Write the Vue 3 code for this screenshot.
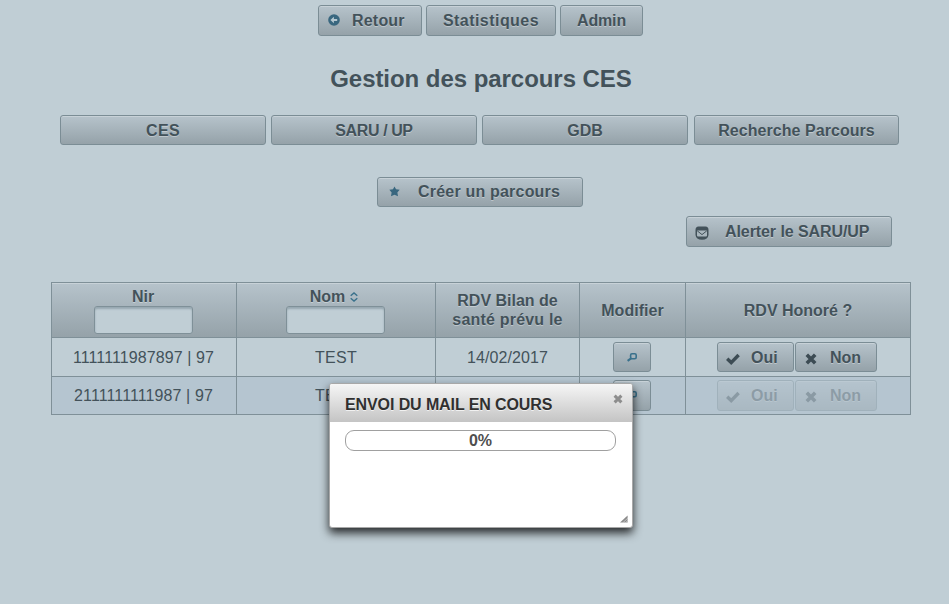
<script setup>
const tabs = [
  { label: 'CES', cls: 'ls-3' },
  { label: 'SARU / UP', cls: 'ls-n4' },
  { label: 'GDB', cls: '' },
  { label: 'Recherche Parcours', cls: 'ls-05' },
]
const rows = [
  { nir: '1111111987897 | 97', nom: 'TEST', date: '14/02/2017', disabled: false },
  { nir: '2111111111987 | 97', nom: 'TEST', date: '14/02/2017', disabled: true },
]
</script>

<template>
  <main class="page">
    <nav class="top-nav">
      <button class="btn back">
        <svg class="ico back-ico" viewBox="0 0 12 12" width="12" height="12">
          <circle cx="6" cy="6" r="5.8" fill="#39677f" />
          <path d="M2.4 6 L5.9 2.8 V5 H9.2 V7 H5.9 V9.2 Z" fill="#b6c8d1" />
        </svg>
        <span class="ls-2">Retour</span>
      </button>
      <button class="btn stats"><span class="ls-4">Statistiques</span></button>
      <button class="btn admin"><span class="ls-n1">Admin</span></button>
    </nav>

    <h1>Gestion des parcours CES</h1>

    <nav class="tabs">
      <button v-for="t in tabs" :key="t.label" class="btn short"><span :class="t.cls">{{ t.label }}</span></button>
    </nav>

    <div class="create-row">
      <button class="btn short create">
        <svg class="ico" viewBox="0 0 10 10" width="11" height="11">
          <path d="M5 .4 L6.4 3 L9.7 3.5 L7.6 5.9 L8.2 9.4 L5 8 L1.8 9.4 L2.4 5.9 L.3 3.5 L3.6 3 Z" fill="#39677f" />
        </svg>
        <span class="ls-2">Créer un parcours</span>
      </button>
    </div>

    <div class="alert-row">
      <button class="btn alert">
        <svg class="ico mail-ico" viewBox="0 0 14 14" width="14" height="14">
          <path d="M3.5 .5 H10.5 Q13.5 .8 13.5 4 V9 Q13 13.8 7 13.8 Q1 13.8 .5 9 V4 Q.5 .8 3.5 .5 Z" fill="#43525a" />
          <path d="M2 4.6 H12 V9.4 Q12 10.4 11 10.4 H3 Q2 10.4 2 9.4 Z" fill="#a9b6bd" />
          <path d="M2.2 4.8 L7 8.6 L11.8 4.8" fill="none" stroke="#43525a" stroke-width="1" />
        </svg>
        <span class="ls-n05">Alerter le SARU/UP</span>
      </button>
    </div>

    <table>
      <colgroup>
        <col class="c1" /><col class="c2" /><col class="c3" /><col class="c4" /><col class="c5" />
      </colgroup>
      <thead>
        <tr>
          <th class="filter">
            <div class="head"><span>Nir</span></div>
            <input type="text" aria-label="Nir" />
          </th>
          <th class="filter">
            <div class="head sort">
              <span>Nom</span>
              <svg viewBox="0 0 8 10" width="8" height="10">
                <path d="M.7 3.8 L4 1 L7.3 3.8 M.7 6.2 L4 9 L7.3 6.2" fill="none" stroke="#39718c" stroke-width="1.4" />
              </svg>
            </div>
            <input type="text" aria-label="Nom" />
          </th>
          <th><span>RDV Bilan de</span><br /><span class="ls-2">santé prévu le</span></th>
          <th><span class="ls-05">Modifier</span></th>
          <th><span>RDV Honoré ?</span></th>
        </tr>
      </thead>
      <tbody>
        <tr v-for="r in rows" :key="r.nir" :class="{ odd: r.disabled }">
          <td class="nir"><span class="ls-1">{{ r.nir }}</span></td>
          <td><span class="ls-3">{{ r.nom }}</span></td>
          <td><span class="ls-1">{{ r.date }}</span></td>
          <td>
            <div class="cell">
              <button class="btn edit">
                <svg viewBox="0 0 10 9" width="10" height="9">
                  <rect x="3.6" y=".8" width="5.6" height="4.9" rx="1.4" fill="none" stroke="#39718c" stroke-width="1.6" />
                  <path d="M4.4 5.2 L.6 7.9" fill="none" stroke="#39718c" stroke-width="2.2" />
                </svg>
              </button>
            </div>
          </td>
          <td>
            <div class="cell">
              <button class="btn yes" :class="{ off: r.disabled }">
                <svg class="ico low" viewBox="0 0 14 12" width="14" height="12">
                  <path d="M1.2 5.8 L5.2 9.6 L12.6 2" fill="none" stroke="#3d4c54" stroke-width="3.4" />
                </svg>
                <span>Oui</span>
              </button>
              <button class="btn no" :class="{ off: r.disabled }">
                <svg class="ico low" viewBox="0 0 12 12" width="12" height="12">
                  <path d="M1.8 1.8 L10.2 10.2 M10.2 1.8 L1.8 10.2" fill="none" stroke="#3d4c54" stroke-width="3.6" />
                </svg>
                <span>Non</span>
              </button>
            </div>
          </td>
        </tr>
      </tbody>
    </table>

    <section class="dialog" role="dialog">
      <header>
        <h2>ENVOI DU MAIL EN COURS</h2>
        <svg class="close" viewBox="0 0 10 10" width="10" height="10">
          <path d="M1.6 1.6 L8.4 8.4 M8.4 1.6 L1.6 8.4" fill="none" stroke="#8d8d8d" stroke-width="3" />
        </svg>
      </header>
      <div class="content"><div class="progress">0%</div></div>
      <svg class="grip" viewBox="0 0 8 8" width="8" height="8">
        <path d="M0 7.6 L7.6 .4 V7.6 Z" fill="#8a8a8a" />
        <path d="M2.6 8 L8 2.9 M5.2 8 L8 5.4" stroke="#d8d8d8" stroke-width=".7" />
      </svg>
    </section>
  </main>
</template>

<style>
body { margin: 0; background: #c0ced5; }
</style>

<style scoped>
.page {
  box-sizing: border-box;
  position: relative;
  height: 604px;
  width: 949px;
  overflow: hidden;
  padding: 5px 38px 0 51px;
  background: #c0ced5;
  color: #43525a;
  font-family: "Liberation Sans", Arial, sans-serif;
  font-size: 16px;
  line-height: 19px;
}
.ls-n4 { letter-spacing: -.4px; }
.ls-n1 { letter-spacing: -.15px; }
.ls-n05 { letter-spacing: -.08px; }
.ls-05 { letter-spacing: .05px; }
.ls-1 { letter-spacing: .1px; }
.ls-2 { letter-spacing: .2px; }
.ls-3 { letter-spacing: .3px; }
.ls-4 { letter-spacing: .45px; }
.btn {
  box-sizing: border-box;
  display: flex;
  align-items: center;
  justify-content: center;
  flex: none;
  height: 31px;
  margin: 0;
  padding: 0 0 1px;
  border: 1px solid #7b8d95;
  border-radius: 3px;
  background: linear-gradient(#b6c3cb, #95a2a9);
  box-shadow: inset 0 1px 0 rgba(255, 255, 255, .25);
  color: #43525a;
  font: bold 16px/19px "Liberation Sans", Arial, sans-serif;
  text-shadow: 0 1px 0 rgba(255, 255, 255, .35);
  white-space: nowrap;
}
.short { height: 30px; padding: 0; }
.ico { flex: none; }
.top-nav { display: flex; gap: 4px; padding-left: 267px; }
.back { width: 104px; justify-content: flex-start; padding-left: 9px; gap: 12px; }
.stats { width: 130px; }
.admin { width: 83px; }
h1 {
  margin: 28px 0 0;
  height: 30px;
  font-size: 24px;
  line-height: 30px;
  letter-spacing: -.05px;
  text-align: center;
}
.tabs {
  display: grid;
  grid-template-columns: 206px 206px 206px 206px;
  column-gap: 5px;
  margin: 21px 0 0 9px;
}
.tabs .btn:last-child { margin-left: 1px; }
.create-row { display: flex; justify-content: center; margin: 32px 2px 0 0; }
.create { width: 206px; justify-content: flex-start; padding: 0 0 2px 11px; gap: 18px; }
.alert-row { display: flex; justify-content: flex-end; margin: 9px 19px 0 0; }
.alert { width: 206px; justify-content: flex-start; padding-left: 8px; gap: 16px; }
.mail-ico { margin-top: 3px; }
table {
  width: 860px;
  margin-top: 35px;
  table-layout: fixed;
  border-collapse: separate;
  border-spacing: 0;
  border-right: 1px solid #7f9098;
  border-bottom: 1px solid #7f9098;
}
.c1 { width: 185px; }
.c2 { width: 199px; }
.c3 { width: 144px; }
.c4 { width: 106px; }
.c5 { width: 225px; }
th, td {
  box-sizing: border-box;
  padding: 0;
  border-left: 1px solid #7f9098;
  border-top: 1px solid #7f9098;
  text-align: center;
  vertical-align: middle;
}
th {
  height: 55px;
  background: linear-gradient(#b6c3cb, #95a2a9);
  box-shadow: inset 0 1px 0 rgba(255, 255, 255, .25);
  text-shadow: 0 1px 0 rgba(255, 255, 255, .35);
}
.filter { vertical-align: top; padding: 4px 2px 0 0; }
.head { display: flex; justify-content: center; align-items: center; gap: 5px; height: 19px; }
.sort { padding-right: 2px; }
input {
  box-sizing: border-box;
  display: block;
  width: 99px;
  height: 28px;
  margin: 0 auto;
  border: 1px solid #7f9098;
  border-radius: 3px;
  background: #c0ced5;
  box-shadow: inset 0 2px 2px rgba(100, 120, 130, .45);
}
td { height: 39px; }
.nir { padding-right: 1px; }
tbody tr:last-child td { height: 38px; }
.odd td { background: #b5c5d0; }
.cell { display: flex; justify-content: center; gap: 1px; padding-right: 2px; }
.cell .btn { height: 30px; }
.odd .cell .btn { height: 31px; }
.edit { width: 38px; padding: 0; }
.cell .yes, .cell .no { justify-content: flex-start; padding-bottom: 0; }
.odd .cell .yes, .odd .cell .no { padding-bottom: 1px; }
.yes { width: 77px; padding-left: 8px; gap: 11px; }
.no { width: 82px; padding-left: 9px; gap: 13px; }
.low { margin-top: 3px; }
.off { opacity: .35; }
.dialog {
  box-sizing: border-box;
  position: absolute;
  left: 329px;
  top: 383px;
  width: 304px;
  height: 145px;
  border: 1px solid #a8a8a8;
  border-radius: 3px;
  background: #fff;
  box-shadow: 0 5px 10px rgba(0, 0, 0, .8);
}
.dialog header {
  box-sizing: border-box;
  display: flex;
  justify-content: space-between;
  align-items: flex-start;
  height: 38px;
  padding: 10px 9px 0 15px;
  background: linear-gradient(#f6f6f6, #c4c4c4);
  border-radius: 2px 2px 0 0;
}
h2 {
  margin: 1px 0 0;
  color: #303030;
  font-size: 16px;
  line-height: 19px;
  letter-spacing: -.1px;
  text-shadow: 0 1px 0 rgba(255, 255, 255, .7);
}
.content { padding: 8px 16px 0 15px; }
.progress {
  box-sizing: border-box;
  height: 21px;
  border: 1px solid #a0a0a0;
  border-radius: 9px;
  color: #4f4f4f;
  font-weight: bold;
  text-align: center;
}
.grip { position: absolute; right: 4px; bottom: 4px; }
</style>
